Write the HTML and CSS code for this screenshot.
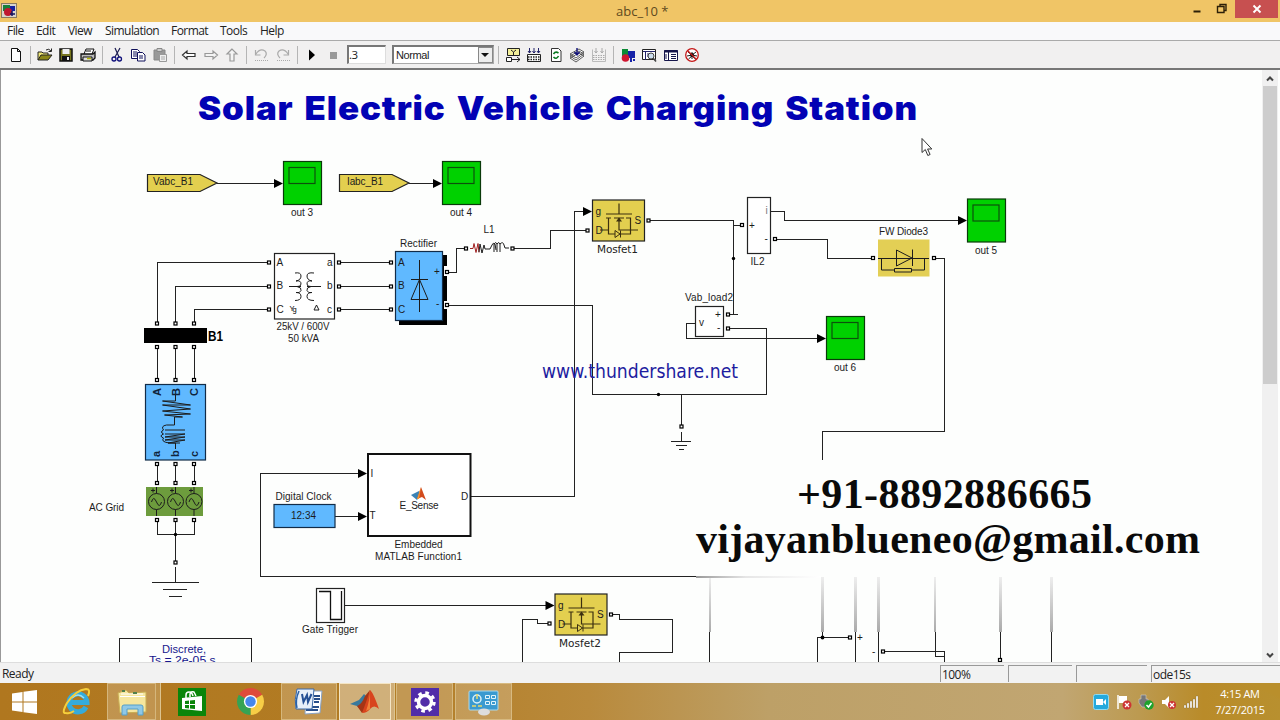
FILE: index.html
```html
<!DOCTYPE html>
<html lang="en">
<head>
<meta charset="utf-8">
<title>abc_10 *</title>
<link rel="stylesheet" href="styles.css">
</head>
<body>
<div class="window">
  <header class="titlebar">
    <svg class="app-icon" width="16" height="16" viewBox="0 0 16 16"><rect x="0.5" y="1.5" width="15" height="14" fill="#d8d4cc" stroke="#8a7a60"/><path d="M2 3h7v6H2z" fill="#17803a"/><path d="M9 4h5v5H9z" fill="#1420a0"/><circle cx="7" cy="10" r="4" fill="#c01830"/><path d="M11 9v5M9 12h5" stroke="#101060" stroke-width="1.5"/></svg>
    <span class="title">abc_10 *</span>
    <div class="controls">
      <svg width="75" height="22" viewBox="0 0 75 22"><path d="M33.500 11.500h7" stroke="#2c2008" stroke-width="2"/><path d="M57.500 6.500h6.500v6h-6.500zM60 6V4.500h6v6h-2" stroke="#2c2008" stroke-width="1.400" fill="none"/></svg>
      <span class="close"><svg width="10" height="10" viewBox="0 0 10 10"><path d="M1.500 1.500l7 7M8.500 1.500l-7 7" stroke="#fff" stroke-width="1.900"/></svg></span>
    </div>
  </header>
  <nav class="menubar"><span class="m-file">File</span><span class="m-edit">Edit</span><span class="m-view">View</span><span class="m-sim">Simulation</span><span class="m-format">Format</span><span class="m-tools">Tools</span><span>Help</span></nav>
  <div class="toolbar">
    <svg class="ic" viewBox="0 0 16 16"><path d="M3.500 1.500h6l3 3v10h-9zM9.500 1.500v3h3" fill="#fff" stroke="#111"/></svg>
    <i class="sep"></i>
    <svg class="ic" viewBox="0 0 16 16"><path d="M1 13V5h4l1 1h5v2" fill="#f0e878" stroke="#222"/><path d="M1 13l3-5h11l-4 5z" fill="#8a8618" stroke="#222"/><path d="M9 3q3-2 5 1M14.500 1.500v3h-3" fill="none" stroke="#222"/></svg>
    <svg class="ic" viewBox="0 0 16 16"><path d="M2 2h12v12H2z" fill="#77751c" stroke="#111" stroke-width="1.500"/><path d="M4.500 2h7v5h-7z" fill="#eee"/><path d="M4 9h8v5H4z" fill="#111"/><path d="M9 10h2v3H9z" fill="#eee"/></svg>
    <svg class="ic" viewBox="0 0 16 16"><path d="M4 7l2-5h8l-2 5M6 4h5" fill="#fff" stroke="#111"/><path d="M1 7h12l2-2v6l-2 2H1z" fill="#bbb" stroke="#111" stroke-width="1.300"/><path d="M3 10h9v4H3z" fill="#ddd" stroke="#111"/><path d="M7 11.500h4" stroke="#b5b400" stroke-width="1.500"/></svg>
    <i class="sep"></i>
    <svg class="ic" viewBox="0 0 16 16"><path d="M6 1l4 9M11 1L6 10" stroke="#1a1a50" stroke-width="1.200"/><circle cx="5" cy="12" r="2" fill="none" stroke="#10107a" stroke-width="1.300"/><circle cx="10.500" cy="12" r="2" fill="none" stroke="#10107a" stroke-width="1.300"/></svg>
    <svg class="ic" viewBox="0 0 16 16"><path d="M1.500 2.500h6l2 2v7h-8z" fill="#fff" stroke="#10105a"/><path d="M7.500 5.500h5l2.500 2.500v6H7.500z" fill="#fff" stroke="#10105a"/><path d="M3 5h4M3 7h4M3 9h4M9 9h4M9 11h4" stroke="#10105a"/></svg>
    <svg class="ic" viewBox="0 0 16 16"><path d="M2 3h11v10H2z" fill="#999" stroke="#888"/><path d="M5 1.500h5v3H5z" fill="#ccc" stroke="#888"/><path d="M7.500 7.500h7v7h-7z" fill="#eee" stroke="#999"/><path d="M9 10h4M9 12h4" stroke="#aaa"/></svg>
    <i class="sep"></i>
    <svg class="ic" viewBox="0 0 16 16"><path d="M1.500 8L6 4v2.500h8v3H6V12z" fill="#fff" stroke="#333" stroke-width="1.200"/></svg>
    <svg class="ic" viewBox="0 0 16 16"><path d="M14.500 8L10 4v2.500H2v3h8V12z" fill="#f4f4f4" stroke="#999" stroke-width="1.200"/></svg>
    <svg class="ic" viewBox="0 0 16 16"><path d="M8 2L3 7h3v7h4V7h3z" fill="#f4f4f4" stroke="#999" stroke-width="1.200"/></svg>
    <i class="sep"></i>
    <svg class="ic" viewBox="0 0 16 16"><path d="M2.500 3v5h5M3 7q4-6 9-3q3 3-1 7" fill="none" stroke="#aaa" stroke-width="1.200"/><path d="M2 13.500h13" stroke="#aaa" stroke-dasharray="1 1"/></svg>
    <svg class="ic" viewBox="0 0 16 16"><path d="M13.500 3v5h-5M13 7q-4-6-9-3q-3 3 1 7" fill="none" stroke="#aaa" stroke-width="1.200"/><path d="M2 13.500h13" stroke="#aaa" stroke-dasharray="1 1"/></svg>
    <i class="sep"></i>
    <svg class="ic" viewBox="0 0 16 16"><path d="M5 2.500v11L11 8z"/></svg>
    <svg class="ic" viewBox="0 0 16 16"><path d="M5 5h7v7H5z" fill="#999"/></svg>
    <span class="field">.3</span>
    <span class="select"><span>Normal</span><b class="drop"></b></span>
    <i class="sep sep-wide"></i>
    <svg class="ic" viewBox="0 0 16 16"><path d="M2.500 1.500h12v7h-12z" fill="#f4f09a" stroke="#222"/><path d="M6 3l2.500 2L11 3M8.500 5v4" stroke="#222" fill="none"/><path d="M1.500 10.500h5v4h-5z" fill="#fff" stroke="#222"/><path d="M7 12.500h8M12 10l3 2.500-3 2.500" fill="none" stroke="#222"/></svg>
    <svg class="ic" viewBox="0 0 16 16"><path d="M3.500 1v5M8 1v5M12.500 1v5M2 4l1.500 2L5 4M6.500 4L8 6l1.500-2M11 4l1.500 2L14 4" stroke="#23236a" fill="none"/><path d="M1.500 7.500h13v7h-13z" fill="#fff" stroke="#222"/><path d="M2 10h12M2 12.500h12" stroke="#222" stroke-width="1.400" stroke-dasharray="1.500 1"/></svg>
    <svg class="ic" viewBox="0 0 16 16"><path d="M3.500 1.500h7l2.500 2.500v10.500H3.500z" fill="#fff" stroke="#333"/><path d="M5.500 7q2-3 5-1M10.500 9q-2 4-5 1" stroke="#0a7a20" stroke-width="1.600" fill="none"/></svg>
    <svg class="ic" viewBox="0 0 16 16"><path d="M1 11l6 4 8-6-5-3zM1 9l6 4 8-6-5-3zM1 7l6 4 8-6-5-3z" fill="#fff" stroke="#333" stroke-width=".8"/><path d="M8 1v6M5.500 5L8 8l2.500-3" stroke="#10107a" stroke-width="1.400" fill="none"/></svg>
    <svg class="ic" viewBox="0 0 16 16"><path d="M5 1v5M11 1v5M3.500 4L5 6l1.500-2M9.500 4L11 6l1.500-2" stroke="#aaa" fill="none"/><path d="M1.500 2.500v12h13v-12" fill="none" stroke="#bbb"/><path d="M2 8.500h12M2 10.500h12M2 12.500h12" stroke="#aaa" stroke-dasharray="1.500 1"/></svg>
    <i class="sep"></i>
    <svg class="ic" viewBox="0 0 16 16"><path d="M2 2h6v7H2z" fill="#0a8a35"/><path d="M8 4h7v7H8z" fill="#1622a8"/><path d="M10 11h2v4h-2zM13 12h2v2h-2z" fill="#1622a8"/><circle cx="5.500" cy="11" r="3.800" fill="#d01530"/></svg>
    <svg class="ic" viewBox="0 0 16 16"><path d="M1.500 2.500h13v10h-13z" fill="#fff" stroke="#222"/><path d="M2 4.500h12M4.500 5v8M6 7h3M6 9h3" stroke="#23236a"/><circle cx="10" cy="9" r="3" fill="#cde" stroke="#444"/><path d="M12 11l3 3.500" stroke="#444" stroke-width="1.600"/></svg>
    <svg class="ic" viewBox="0 0 16 16"><path d="M1.500 3.500h13v10h-13z" fill="#fff" stroke="#15154a"/><path d="M1 4.500h14" stroke="#15154a" stroke-width="2"/><path d="M5.500 5v9M3 7v5M8 7.500h5M8 9.500h5M8 11.500h5" stroke="#15154a"/></svg>
    <svg class="ic" viewBox="0 0 16 16"><circle cx="8" cy="8" r="6.300" fill="#fff" stroke="#c41818" stroke-width="1.300"/><path d="M8 5v7M4 5l4 3 4-3M3 9l5-1 5 1M4.500 12L8 9l3.500 3" stroke="#222" fill="none"/><circle cx="8" cy="8" r="2" fill="#111"/><path d="M3.500 3.500l9 9" stroke="#c41818" stroke-width="1.200"/></svg>
  </div>
  <main class="workspace">
    <svg class="diagram" width="1261" height="592" viewBox="0 70 1261 592">
      <defs>
        <g id="port"><rect x="-1.500" y="-1.500" width="3" height="3" fill="#fff" stroke="#000" stroke-width="1.200"/></g>
        <path id="arrow" d="M0 0l-9-4.500v9z"/>
        <g id="scope"><rect x="0.500" y="0.500" width="38" height="43" fill="#00d100" stroke="#0a3a0a" stroke-width="1.200"/><rect x="6" y="6.500" width="26" height="16" fill="none" stroke="#0c500c" stroke-width="1.200"/></g>
        <g id="mosfet"><rect x="0.500" y="0.500" width="52" height="41" fill="#e3cf4f" stroke="#222" stroke-width="1.200"/><path d="M27 4v10M14 14.500h26M14 18.500h5M22 18.500h10M34 18.500h5M16.500 18v16.500h22V18M8 30.500h8M27 19v11.500h19" fill="none" stroke="#3c3010" stroke-width="1.200"/><path d="M27 18l-3 4h6z" fill="#3c3010"/><path d="M23 31v7l5-3.500zM28.500 31v7" fill="#e3cf4f" stroke="#3c3010"/></g>
        <linearGradient id="fade" x1="0" y1="0" x2="0" y2="1"><stop offset="0" stop-color="#eee"/><stop offset="1" stop-color="#aaa"/></linearGradient>
        <linearGradient id="side"><stop offset="0" stop-color="#999"/><stop offset=".4" stop-color="#e6e6e6"/><stop offset="1" stop-color="#fff"/></linearGradient>
      </defs>
      <text class="heading" x="198" y="120" textLength="720" lengthAdjust="spacingAndGlyphs">Solar Electric Vehicle Charging Station</text>

      <path class="wire" d="M217 183.500H275M409 183.500H434M157.500 324V262.500H269M175.500 324V286.500H269M194.500 324V309.500H269M339 262.500H391M339 286.500H391M339 309.500H391M447 272.500H456.500V248.500H466M512 248.500H550.500V230.500H587M447 305.500H592.500V394.500H766.500V328.500H728M648 220.500H733.500V314.500M728 314.500H738M733 225.500H742M771 211.500H784.500V220.500H960M775 239.500H827.500V258.500H873M934 258.500H944.500V431.500H822.500V460M695 323.500H686.500V338.500H820M681.500 394V426M471 496.500H574.500V211.500H584M696 576.500H260.500V473.500H360M335 516.500H360M157.500 347V380M175.500 347V380M194.500 347V380M157.500 464V483M175.500 464V483M194.500 464V483M157.500 520V534.500H194.500V520M175.500 520V562M345 605.500H547M549 623.500H537.500V619.500H522.500V662M611 614.500H619.500V619.500H672.500V652.500H619.500V662M709.500 632V662M822.500 632V637.500M850 637.500H817.500V662M855.500 632V662M878.500 632V662M883 651.500H944.500V662M935.500 632V656.500H944M1000.500 632V660M1051.500 632V662"/>
      <g fill="url(#fade)"><rect x="709" y="577" width="2" height="55"/><rect x="821" y="577" width="3" height="55"/><rect x="854" y="577" width="3" height="55"/><rect x="877" y="577" width="3" height="55"/><rect x="934" y="577" width="2" height="55"/><rect x="999" y="577" width="3" height="55"/><rect x="1050" y="577" width="3" height="55"/></g>
      <rect x="696" y="576" width="125" height="2" fill="url(#side)"/>
      <use href="#arrow" x="283" y="183.500"/><use href="#arrow" x="442" y="183.500"/><use href="#arrow" x="592" y="211.500"/><use href="#arrow" x="967" y="220.500"/><use href="#arrow" x="826" y="338.500"/><use href="#arrow" x="367" y="473.500"/><use href="#arrow" x="367" y="516.500"/><use href="#arrow" x="554.500" y="605.500"/>
      <circle cx="733.500" cy="258.500" r="1.700"/><circle cx="658.500" cy="394.500" r="1.700"/><circle cx="175.500" cy="534.500" r="1.700"/><circle cx="822.500" cy="637.500" r="1.900"/>

      <path class="tag" d="M147.500 174.500H200l17 8.500-17 8.500H147.500zM339.500 174.500H392l17 8.500-17 8.500H339.500z"/>
      <text class="lbl" x="153" y="185" textLength="40">Vabc_B1</text><text class="lbl" x="347" y="185" textLength="36">Iabc_B1</text>
      <use href="#scope" x="283" y="161"/><use href="#scope" x="442" y="161"/><use href="#scope" x="967" y="198.500"/><use href="#scope" x="826" y="316"/>
      <text class="lbl" x="291" y="216" textLength="22">out 3</text><text class="lbl" x="450" y="216" textLength="22">out 4</text><text class="lbl" x="975" y="253.500" textLength="22">out 5</text><text class="lbl" x="834" y="370.500" textLength="22">out 6</text>

      <rect class="box" x="274.500" y="253.500" width="60" height="65.500"/>
      <path class="thin" d="M295 273q6-1 6 3t-5 5q5-1 5 3q0 3-4 2.500M289 286.500h12M297 286.500q5 1 4 4t-5 2q5 0 5 4t-6 4M314 273q-7-1-7 3t5 5q-5-1-5 3q0 3 4 2.500M321 286.500h-14M311 286.500q-5 1-4 4t5 2q-5 0-5 4t7 4"/>
      <text class="lbl" x="276.500" y="265.500">A</text><text class="lbl" x="276.500" y="289">B</text><text class="lbl" x="276.500" y="312.500">C</text><text class="lbl" x="327" y="265.500">a</text><text class="lbl" x="327" y="289">b</text><text class="lbl" x="327" y="312.500">c</text><text class="tiny" x="289.500" y="311">Y</text><text class="tiny" x="292.500" y="312">g</text><path class="thin" d="M314 310h5l-2.500-5z"/>
      <text class="lbl" x="276.500" y="330" textLength="53" lengthAdjust="spacingAndGlyphs">25kV / 600V</text><text class="lbl" x="288" y="342" textLength="31" lengthAdjust="spacingAndGlyphs">50 kVA</text>

      <path d="M399 255h48v70h-48z"/><rect x="444" y="266" width="9" height="10" fill="#fff"/><rect x="444" y="301" width="9" height="8" fill="#fff"/>
      <path class="wire" d="M447 272.500h7M447 305.500h7"/>
      <rect class="blue" x="395.500" y="251.500" width="47" height="69"/>
      <path class="thin" d="M419.500 260v52M411 279.500h17M419.500 279.500l-8.500 20h17z"/>
      <text class="lbl" x="398" y="265.500">A</text><text class="lbl" x="398" y="289">B</text><text class="lbl" x="398" y="312.500">C</text><text class="lbl" x="434" y="275">+</text><text class="lbl" x="436" y="307">-</text>
      <text class="lbl" x="400" y="247" textLength="37">Rectifier</text>
      <text class="lbl" x="483.500" y="232.500">L1</text>
      <path class="thin red" d="M470 248.500h3l1-5 2 9 2-9 1 9"/><path class="thin" d="M479 252l1-8 2 9 2-8 1 4h5l2-4q1-3 3-1l1 6M494 252v-8q2-3 3 0v8M497 244q2-3 3 0v8M500 244q3-3 4 1l1 3h4"/>

      <rect x="144" y="328" width="63" height="15"/><text class="bus" x="208" y="340.500" textLength="15" lengthAdjust="spacingAndGlyphs">B1</text>
      <rect class="blue" x="145.500" y="384.500" width="60" height="75.500"/>
      <g class="rot"><text transform="translate(161 396) rotate(-90)">A</text><text transform="translate(179.500 396) rotate(-90)">B</text><text transform="translate(198 396) rotate(-90)">C</text><text transform="translate(160 457) rotate(-90)">a</text><text transform="translate(179 457) rotate(-90)">b</text><text transform="translate(197.500 457) rotate(-90)">c</text></g>
      <path class="thin" d="M175.500 395v6h-13l28 4h-28l28 4-28 2 28 3-26 1 18 2h-8v8h-8q-6 1-3 5q-4 2 0 4q-5 2 0 4q-3 4 6 5h6v6M165 430h20M165 434h20l-20 3h20l-20 3h20l-17 3h12"/>
      <rect x="146" y="487" width="57" height="29" fill="#6d9c3d"/>
      <g class="thin"><circle cx="156.500" cy="501.500" r="8"/><circle cx="175.500" cy="501.500" r="8"/><circle cx="194" cy="501.500" r="8"/><path d="M156.500 487v6.500M156.500 509.500v6.500M175.500 487v6.500M175.500 509.500v6.500M194 487v6.500M194 509.500v6.500M151.500 502q2-7 5 0t5 0M170.500 502q2-7 5 0t5 0M189 502q2-7 5 0t5 0M151 490.500h4M153 488.500v4M170 490.500h4M172 488.500v4M189 490.500h4M191 488.500v4"/></g>
      <text class="lbl" x="89" y="511" textLength="35">AC Grid</text>
      <path class="wire" d="M175.500 567v15M152 582.500h47M163 589.500h24M169 596.500h13M681.500 432v9M671 441.500h20M676 445.500h11M679 449.500h5"/>

      <use href="#mosfet" x="592" y="199.500"/><use href="#mosfet" x="554.500" y="593.500"/>
      <text class="lbl" x="595.500" y="215">g</text><text class="lbl" x="595.500" y="233.500">D</text><text class="lbl" x="634.500" y="224">S</text>
      <text class="lbl" x="558" y="609">g</text><text class="lbl" x="558" y="627.500">D</text><text class="lbl" x="597" y="618">S</text>
      <text class="sans" x="597" y="253" textLength="41">Mosfet1</text><text class="sans" x="559" y="647" textLength="42">Mosfet2</text>

      <rect class="box" x="747.500" y="197.500" width="23" height="56"/><text class="lbl" x="749" y="228.500">+</text><text class="lbl" x="764.500" y="242">-</text><text class="lbl dim" x="765.500" y="214">i</text><text class="lbl" x="750.500" y="264.500" textLength="14" lengthAdjust="spacingAndGlyphs">IL2</text>
      <rect class="box" x="695.500" y="306.500" width="28" height="30"/><text class="lbl" x="715" y="317.500">+</text><text class="lbl" x="717" y="330.500">-</text><text class="lbl" x="699" y="326">v</text><text class="lbl" x="685" y="301" textLength="48">Vab_load2</text>
      <rect x="878" y="239.500" width="51.500" height="37" fill="#e3cf55"/>
      <path class="thin" d="M878 258.500h51M896.500 250v16l15.500-8zM912.500 249.500v16.500M881.500 258v12h13M912 270h12.500v-12M894.500 268.500h17v3.500h-17z"/>
      <text class="lbl" x="879" y="234.500" textLength="49">FW Diode3</text>
      <text class="share" x="542" y="378" textLength="196" lengthAdjust="spacingAndGlyphs">www.thundershare.net</text>

      <text class="lbl" x="275.500" y="500" textLength="56">Digital Clock</text><rect class="blue" x="274" y="504.500" width="61" height="23"/><text class="lbl" x="291" y="518.500" textLength="25">12:34</text>
      <rect x="368" y="454" width="102.500" height="82" fill="#fff" stroke="#111" stroke-width="2"/>
      <text class="lbl" x="370.500" y="476.500">I</text><text class="lbl" x="369.500" y="518.500">T</text><text class="lbl" x="461" y="500">D</text>
      <path d="M411 495l8-4 2 4-4 5z" fill="#3b83b5"/><path d="M417 499l4-12 5 13-4-3z" fill="#d34a1c"/><path d="M417 499l4-12-2 12z" fill="#f49b36"/>
      <text class="lbl" x="399.500" y="509" textLength="39">E_Sense</text><text class="lbl" x="394.500" y="548" textLength="48">Embedded</text><text class="lbl" x="375" y="560" textLength="87">MATLAB Function1</text>
      <rect class="box" x="316.500" y="588.500" width="28" height="34"/><path d="M319 591.500h11.500v28h11V591" fill="none" stroke="#111" stroke-width="1.300"/><text class="lbl" x="302" y="633" textLength="56">Gate Trigger</text>
      <path class="wire" d="M119.500 662V638.500H251.500V662"/><text class="lbl navy" x="162" y="653" textLength="44" lengthAdjust="spacingAndGlyphs">Discrete,</text><text class="lbl navy" x="149" y="664" textLength="70" lengthAdjust="spacingAndGlyphs">Ts = 2e-05 s.</text>

      <g><use href="#port" x="269" y="262.500"/><use href="#port" x="269" y="286.500"/><use href="#port" x="269" y="309.500"/><use href="#port" x="339" y="262.500"/><use href="#port" x="339" y="286.500"/><use href="#port" x="339" y="309.500"/><use href="#port" x="391" y="262.500"/><use href="#port" x="391" y="286.500"/><use href="#port" x="391" y="309.500"/><use href="#port" x="447" y="272"/><use href="#port" x="447" y="305"/><use href="#port" x="466" y="248.500"/><use href="#port" x="512.500" y="248.500"/><use href="#port" x="587.500" y="230.500"/><use href="#port" x="648.500" y="220.500"/><use href="#port" x="742" y="225"/><use href="#port" x="775" y="239"/><use href="#port" x="728" y="314.500"/><use href="#port" x="728" y="328.500"/><use href="#port" x="681.500" y="426.500"/><use href="#port" x="873" y="258"/><use href="#port" x="934" y="258"/><use href="#port" x="549.500" y="623.500"/><use href="#port" x="611" y="614.500"/><use href="#port" x="850" y="637.500"/><use href="#port" x="883" y="651.500"/><use href="#port" x="1000" y="660"/><use href="#port" x="175.500" y="562.500"/>
      <use href="#port" x="157" y="323.500"/><use href="#port" x="175.500" y="323.500"/><use href="#port" x="194" y="323.500"/><use href="#port" x="157" y="347"/><use href="#port" x="175.500" y="347"/><use href="#port" x="194" y="347"/><use href="#port" x="157" y="380"/><use href="#port" x="175.500" y="380"/><use href="#port" x="194" y="380"/><use href="#port" x="157" y="464"/><use href="#port" x="175.500" y="464"/><use href="#port" x="194" y="464"/><use href="#port" x="157" y="483"/><use href="#port" x="175.500" y="483"/><use href="#port" x="194" y="483"/><use href="#port" x="157" y="520"/><use href="#port" x="175.500" y="520"/><use href="#port" x="194" y="520"/></g>
      <text class="lbl" x="857" y="641">+</text><text class="lbl" x="872" y="654.500">-</text>
      <text class="contact" x="797" y="508" textLength="295">+91-8892886665</text>
      <text class="contact" x="696" y="553" textLength="504">vijayanblueneo@gmail.com</text>
      <path d="M922 138.500v14l3.300-3 2.500 6 2.300-1-2.500-5.500h4.200z" fill="#fff" stroke="#333"/>
    </svg>
    <div class="scroll">
      <svg width="16" height="14" viewBox="0 0 16 14"><path d="M5 8.500l3-3 3 3" fill="none" stroke="#444" stroke-width="2"/></svg>
      <div class="thumb"></div>
      <svg width="16" height="14" viewBox="0 0 16 14"><path d="M5 6.500l3 3 3-3" fill="none" stroke="#444" stroke-width="2"/></svg>
    </div>
  </main>
  <footer class="status"><span class="ready">Ready</span><span class="cell">100%</span><span class="cell"></span><span class="cell c3"></span><span class="cell c4">ode15s</span></footer>
  <div class="taskbar">
    <span class="task start"><svg width="28" height="26" viewBox="0 0 28 26"><path d="M2 4.500l10.500-1.500v9.500H2zM13.500 2.800L27 1v11.500H13.500zM2 13.500h10.500V23L2 21.500zM13.500 13.500H27V25l-13.500-1.800z" fill="#fff"/></svg></span>
    <span class="task ie"><svg width="30" height="30" viewBox="0 0 30 30"><path d="M24 20a9 9 0 1 1 1-4.500H9" fill="none" stroke="#35abdb" stroke-width="5"/><path d="M10 11q6-6 12 0" stroke="#9be1f5" stroke-width="1.500" fill="none"/><path d="M4 26Q-1 27 5 16Q14 3 24 2q5 0 2 7M4 26q4 1 8-2" fill="none" stroke="#f6cf3b" stroke-width="2"/></svg></span>
    <span class="task explorer on"><svg width="30" height="28" viewBox="0 0 30 28"><path d="M1 5l8-3 3 3 17-1v20l-26 1z" fill="#f6e69d" stroke="#c8ad54"/><path d="M4 6h22M3 8.500h25" stroke="#fff"/><path d="M5 3h3M16 5h4" stroke="#52804c" stroke-width="2"/><path d="M5 27V19q0-2 2-2h17q2 0 2 2v8h-5v-6H10v6z" fill="#8fc8e6" stroke="#559fc8"/></svg></span><i class="stack"></i>
    <span class="task store"><svg width="28" height="28" viewBox="0 0 28 28"><path d="M0 0h28v28H0z" fill="#0a850a"/><path d="M4 10l20-2v15L4 21z" fill="#fff"/><path d="M8 10V7q0-3 3-3t4 4M12 9V6q1-3 4-2l2 4" fill="none" stroke="#fff" stroke-width="1.500"/><path d="M7 13l4-.5v3.500H7zM12 12.400l5-.5V16h-5zM7 17h4v3.500L7 20zM12 17h5v4l-5-.4z" fill="#0a850a"/></svg></span>
    <span class="task chrome"><svg width="29" height="29" viewBox="0 0 30 30"><path d="M15 15L2.900 8A14 14 0 0 1 27.100 8z" fill="#df4b3b"/><path d="M15 15L27.100 8A14 14 0 0 1 15 29z" fill="#f7cd46"/><path d="M15 15V29A14 14 0 0 1 2.900 8z" fill="#35a354"/><circle cx="15" cy="15" r="6.800" fill="#fff"/><circle cx="15" cy="15" r="5.400" fill="#4787eb"/></svg></span>
    <span class="task word on"><svg width="30" height="28" viewBox="0 0 30 28"><path d="M12 3h16l-2 22-15 1z" fill="#fff" stroke="#8aa3c5"/><path d="M20 8h6M20 11h6M20 14h5M12 19h13M12 22h12" stroke="#284e89" stroke-width="1.800"/><path d="M3 1h17l-2 20H2Q0 12 3 1z" fill="#e8f0fa" stroke="#3b69a7"/><path d="M5 3q-4 9-2 17" stroke="#2a62a8" stroke-width="1.500" fill="none"/><path d="M8 6l1.500 8 3.500-7 1 7 3.500-8" fill="none" stroke="#244f94" stroke-width="2"/></svg></span>
    <span class="task matlab on active"><svg width="32" height="28" viewBox="0 0 32 28"><path d="M1 16l9-4 5-6 4 4-7 12-4-4z" fill="#38799d"/><path d="M8 18q5-2 8-10l5-6-3 16-5 7z" fill="#a53515"/><path d="M13 25Q18 12 21 2q3 2 9 19-5-5-9 0-3 4-8 4z" fill="#d8441d"/><path d="M21 2q0 10-4 21l4-2z" fill="#f08137"/></svg></span><i class="stack light"></i>
    <span class="task gear on"><svg width="28" height="28" viewBox="0 0 28 28"><path d="M0 0h28v28H0z" fill="#512da8"/><circle cx="14" cy="14" r="6.500" fill="none" stroke="#fff" stroke-width="3.500"/><circle cx="14" cy="14" r="9.200" fill="none" stroke="#fff" stroke-width="3" stroke-dasharray="3.600 3.625"/></svg></span>
    <span class="task panel on"><svg width="32" height="28" viewBox="0 0 32 28"><rect x="1" y="3" width="29" height="19" rx="1" fill="#3a9ad0" stroke="#a9d9ee"/><circle cx="9" cy="11" r="4" fill="none" stroke="#d9f2fa" stroke-width="1.500"/><path d="M9 11V6M4 18h4M10 18h4" stroke="#e7d96b" stroke-width="1.500"/><path d="M17.500 7.500h4v3h-4zM23.500 7.500h4v3h-4zM17.500 13.500h4v3h-4zM23.500 13.500h4v3h-4z" fill="none" stroke="#e0f4fb"/><ellipse cx="16" cy="24" rx="6" ry="3.500" fill="#ddd"/></svg></span>
    <div class="tray">
      <svg width="16" height="16" viewBox="0 0 16 16"><rect x="0.500" y="0.500" width="15" height="15" rx="2" fill="#24a9dc" stroke="#8edaf2"/><path d="M3 5h7v6H3zM10 8l3-3v6z" fill="#fff"/></svg>
      <svg width="16" height="16" viewBox="0 0 16 16"><path d="M2 1v14" stroke="#fff" stroke-width="1.500"/><path d="M3 2h8v7H3z" fill="#fff"/><circle cx="11" cy="11" r="4.500" fill="#cd3434"/><path d="M9 9l4 4M13 9l-4 4" stroke="#fff" stroke-width="1.300"/></svg>
      <svg width="16" height="16" viewBox="0 0 16 16"><path d="M3 1h5v4h2v5l-3 3H4L1 9V5h2z" fill="#777" stroke="#ccc" stroke-width=".6"/><circle cx="11" cy="11" r="4.700" fill="#1da22c"/><path d="M8.500 11l2 2 3-4" fill="none" stroke="#fff" stroke-width="1.500"/></svg>
      <svg width="16" height="16" viewBox="0 0 16 16"><path d="M1 6h3l4-4v12L4 10H1z" fill="#fff"/><circle cx="11" cy="11" r="4" fill="#cd3434"/><path d="M9 9l4 4M13 9l-4 4" stroke="#fff" stroke-width="1.300"/></svg>
      <svg width="16" height="16" viewBox="0 0 16 16"><path d="M1 11h2v3H1zM4 9h2v5H4zM7 7h2v7H7zM10 5h2v9h-2zM13 2h2v12h-2z" fill="#fff" stroke="#8c7040" stroke-width=".4"/></svg>
    </div>
    <div class="clock"><span>4:15 AM</span><span>7/27/2015</span></div>
  </div>
</div>
</body>
</html>
```
FILE: styles.css
```css
* { box-sizing: border-box; }
body { margin: 0; overflow: hidden; font-family: "Open Sans", "Noto Sans", sans-serif; font-size: 12px; letter-spacing: -0.550px; color: #222; }
.window { display: flex; flex-direction: column; width: 1280px; height: 720px; background: #f1f0f0; }
.titlebar { display: grid; grid-template-columns: 20px 1fr 120px; height: 22px; background: #f0c566; flex: none; }
.app-icon { margin: 2px 0 0 1px; }
.title { font-size: 13px; letter-spacing: 0; line-height: 22px; color: #5e4a20; padding-left: 596px; white-space: nowrap; }
.controls { display: flex; justify-content: flex-end; }
.controls > svg { flex: none; }
.close { width: 43px; height: 18px; margin-right: 2px; background: #c75050; display: flex; align-items: center; justify-content: center; flex: none; }
.menubar { display: flex; height: 19px; flex: none; background: #f9f9fa; border-bottom: 1px solid #aaa; padding-left: 7px; line-height: 17px; white-space: nowrap; }
.menubar span { flex: none; }
.m-file { width: 29px; }
.m-edit { width: 32px; }
.m-view { width: 37px; }
.m-sim { width: 66px; }
.m-format { width: 49px; }
.m-tools { width: 40px; }
.toolbar { display: flex; align-items: center; height: 29px; flex: none; padding-left: 5px; border-bottom: 2px solid #777; }
.ic { width: 16px; height: 16px; margin: 0 2.750px; flex: none; }
.sep { width: 1px; height: 18px; margin: 0 3.300px; background: #b5b5b5; flex: none; }
.sep-wide { margin: 0 3px 0 4px; }
.field { width: 39px; height: 19px; margin-left: 3px; border: 1px solid #ddd; border-top: 2px solid #777; border-left: 2px solid #777; background: #fff; font-size: 11.500px; line-height: 16px; }
.select { display: flex; justify-content: space-between; width: 102px; height: 19px; margin-left: 6px; padding-left: 2px; border: 1px solid #aaa; border-top: 2px solid #777; border-left: 2px solid #777; background: #fff; font-family: "Liberation Sans", sans-serif; font-size: 11px; letter-spacing: -0.400px; line-height: 17px; }
.drop { width: 15px; background: #ededed; border: 1px solid #888; display: flex; align-items: center; justify-content: center; }
.drop::after { content: ""; border: 4px solid transparent; border-top-color: #111; border-bottom: 0; }
.workspace { display: flex; height: 592px; flex: none; background: #fdfefd; border-left: 1px solid #999; }
.diagram { display: block; flex: none; margin-left: -1px; letter-spacing: 0; }
.scroll { width: 16px; display: flex; flex-direction: column; align-items: center; background: #f0f0f0; margin-left: 1px; padding-top: 2px; padding-bottom: 1px; }
.thumb { width: 14px; height: 298px; background: #cdcdcd; margin-bottom: auto; }
.status { display: flex; height: 21px; flex: none; background: #f2f2f2; border-top: 1px solid #ddd; padding: 2px 0 1px 2px; line-height: 18px; }
.ready { width: 938px; }
.cell { width: 64px; margin-right: 4px; border-top: 1px solid #999; border-left: 1px solid #999; padding-left: 1px; line-height: 17px; }
.c3 { width: 71px; }
.c4 { width: 129px; margin: 0; }
.taskbar { display: flex; height: 37px; flex: none; color: #fff; background: linear-gradient(25deg, transparent 86%, #b98f2c 88%) right / 180px 37px no-repeat, linear-gradient(90deg, #b0771f 0, #b27c24 30%, #b98a3c 46%, #bda067 60%, #c1a672 83%, #bc9a50 89%, #b98b29 94%, #b8902f 100%); }
.task { display: flex; align-items: center; justify-content: center; flex: none; }
.on { background: #ffffff35; border: 1px solid #e0c793aa; }
.active { background: #ffffff65; border-color: #f4e5c4; }
.start { width: 47px; }
.ie { width: 60px; }
.explorer { width: 49px; }
.stack { width: 5px; flex: none; background: #ffffff30; border-right: 1px solid #dcc48f; }
.light { width: 4px; background: #ffffff60; }
.store { width: 62px; }
.chrome { width: 54px; }
.word { width: 56px; margin-left: 4px; }
.matlab { width: 52px; margin-left: 2px; }
.gear { width: 57px; margin-left: 1px; }
.panel { width: 57px; margin-left: 2px; }
.tray { display: flex; align-items: center; gap: 6.500px; margin-left: auto; margin-right: 1px; }
.clock { width: 80px; display: flex; flex-direction: column; align-items: center; justify-content: center; font-size: 11px; letter-spacing: -0.300px; line-height: 15.500px; }
.wire { fill: none; stroke: #222; stroke-width: 1; shape-rendering: crispEdges; }
.thin { fill: none; stroke: #1c1c1c; stroke-width: 1; }
.red { stroke: #a02020; }
.box { fill: #fff; stroke: #222; stroke-width: 1.200; }
.blue { fill: #60b9ff; stroke: #122c48; stroke-width: 1.200; }
.tag { fill: #e3cf4f; stroke: #222; stroke-width: 1.200; }
.lbl { font: 10px "Liberation Sans", sans-serif; fill: #1c1c1c; }
.dim { fill: #777; }
.tiny { font: 7.500px "Liberation Sans", sans-serif; }
.navy { fill: #16168c; }
.bus { font: bold 14px "Liberation Sans", sans-serif; }
.rot { font: bold 11px "Liberation Sans", sans-serif; fill: #10243c; }
.sans { font: 10.500px "DejaVu Sans", sans-serif; fill: #222; }
.share { font: 19.500px "DejaVu Sans", sans-serif; fill: #1d1da0; }
.heading { font: 900 32.500px Inter, "Liberation Sans", sans-serif; letter-spacing: 0.800px; word-spacing: 3px; fill: #0202b4; }
.contact { font: bold 42px "Liberation Serif", serif; fill: #0a0a0a; }
```
